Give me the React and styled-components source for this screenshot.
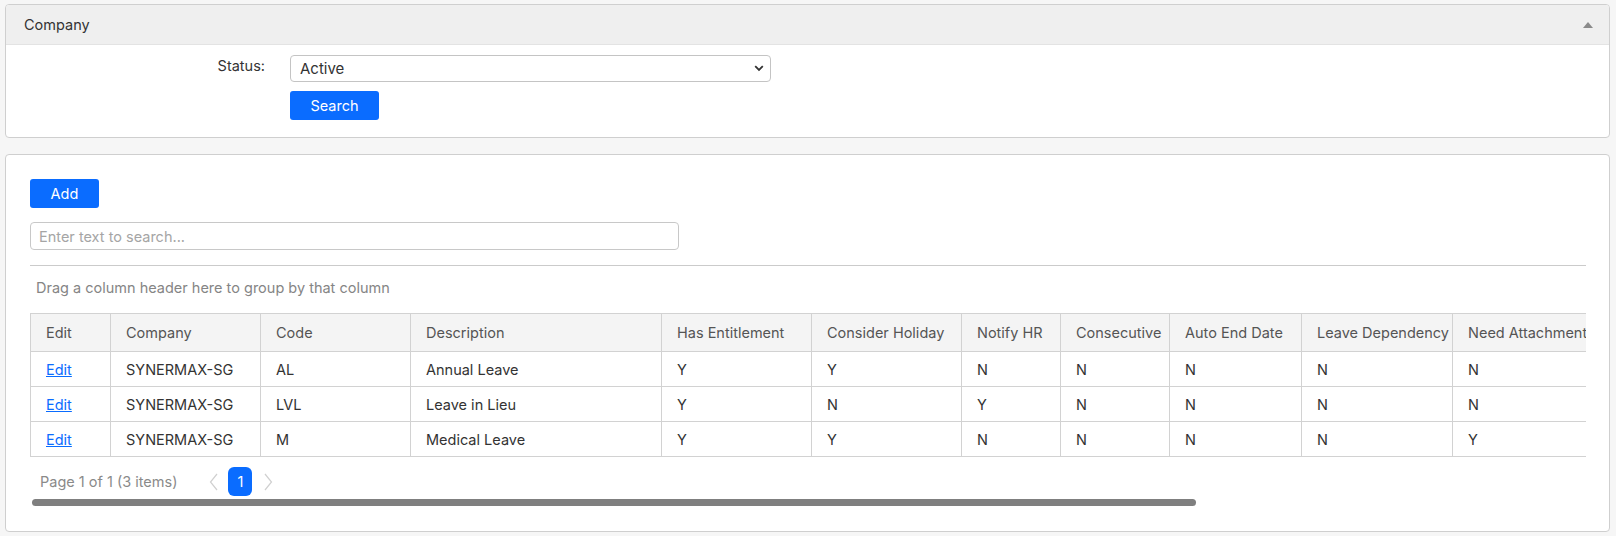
import React, { useState } from 'react';
import styled, { createGlobalStyle } from 'styled-components';

const GlobalStyle = createGlobalStyle`
  body {
    margin: 0;
    background: #f6f6f6;
    font-family: Inter, 'Liberation Sans', Arial, sans-serif;
    font-size: 14.5px;
    color: #333;
  }
`;

const Page = styled.div`
  display: flex;
  flex-direction: column;
  gap: 16px;
  padding: 4px 6px 6px 5px;
`;

const Panel = styled.section`
  background: #fff;
  border: 1px solid #cfcfcf;
  border-radius: 4px;
  overflow: hidden;
`;

const PanelHeader = styled.div`
  display: flex;
  align-items: center;
  justify-content: space-between;
  height: 39px;
  padding: 0 16px 0 18px;
  background: #efefef;
  border-bottom: 1px solid #e3e3e3;
  color: #333;
`;

const CollapseArrow = styled.span`
  width: 0;
  height: 0;
  border-left: 5px solid transparent;
  border-right: 5px solid transparent;
  border-bottom: 6px solid #8a8a8a;
`;

const FilterForm = styled.div`
  display: grid;
  grid-template-columns: 259px 481px;
  column-gap: 25px;
  row-gap: 9px;
  padding: 10px 0 17px;
`;

const Label = styled.label`
  text-align: right;
  padding-top: 2px;
  color: #333;
`;

const SelectWrap = styled.div`
  position: relative;
`;

const Select = styled.select`
  appearance: none;
  width: 100%;
  height: 27px;
  padding: 0 28px 0 9px;
  border: 1px solid #c4c4c4;
  border-radius: 4px;
  background: #fff;
  font: inherit;
  font-size: 15px;
  color: #333;
`;

const SelectChevron = styled.svg`
  position: absolute;
  right: 7px;
  top: 10px;
  pointer-events: none;
`;

const Button = styled.button`
  width: ${(p) => p.w}px;
  height: 29px;
  border: none;
  border-radius: 3px;
  background: #0a6cff;
  color: #fff;
  font: inherit;
  cursor: pointer;
`;

const GridBody = styled.div`
  display: flex;
  flex-direction: column;
  padding: 24px 23px 25px 24px;
`;

const SearchInput = styled.input`
  box-sizing: border-box;
  width: 649px;
  height: 28px;
  margin-top: 14px;
  padding: 0 8px;
  border: 1px solid #c8c8c8;
  border-radius: 4px;
  font: inherit;
  color: #333;
  &::placeholder {
    color: #a5a5a5;
  }
`;

const GroupPanel = styled.div`
  margin-top: 15px;
  border-top: 1px solid #cbcbcb;
  padding: 13px 6px 0;
  height: 34px;
  color: #858585;
`;

const TableClip = styled.div`
  overflow: hidden;
  width: 1556px;
`;

const Table = styled.table`
  border-collapse: collapse;
  table-layout: fixed;
  width: ${(p) => p.w}px;
`;

const Th = styled.th`
  height: 37px;
  padding: 0 15px;
  text-align: left;
  font-weight: normal;
  color: #555;
  background: #f4f4f4;
  border: 1px solid #d2d2d2;
  white-space: nowrap;
  overflow: hidden;
`;

const Td = styled.td`
  height: 34px;
  padding: 0 15px;
  color: #333;
  border: 1px solid #d2d2d2;
  white-space: nowrap;
  overflow: hidden;
`;

const EditLink = styled.a`
  color: #0a6cff;
  text-decoration: underline;
  cursor: pointer;
`;

const Pager = styled.div`
  display: flex;
  align-items: center;
  height: 29px;
  margin-top: 10px;
  padding-left: 10px;
  color: #8a8a8a;
`;

const PagerArrow = styled.svg`
  margin-left: ${(p) => p.ml}px;
  margin-right: ${(p) => p.mr}px;
`;

const PageNum = styled.span`
  display: inline-flex;
  align-items: center;
  justify-content: center;
  width: 24px;
  height: 29px;
  border-radius: 6px;
  background: #0a6cff;
  color: #fff;
`;

const ScrollThumb = styled.div`
  height: 7px;
  margin: 3px 0 0 2px;
  border-radius: 4px;
  background: #7f7f7f;
`;

const columns = [
  ['Edit', 80],
  ['Company', 150],
  ['Code', 150],
  ['Description', 251],
  ['Has Entitlement', 150],
  ['Consider Holiday', 150],
  ['Notify HR', 99],
  ['Consecutive', 109],
  ['Auto End Date', 132],
  ['Leave Dependency', 151],
  ['Need Attachment', 160],
  ['Need Reason', 180],
  ['Status', 316],
];

const tableWidth = columns.reduce((s, c) => s + c[1], 0);

const rows = [
  ['SYNERMAX-SG', 'AL', 'Annual Leave', 'Y', 'Y', 'N', 'N', 'N', 'N', 'N', 'Y', 'Active'],
  ['SYNERMAX-SG', 'LVL', 'Leave in Lieu', 'Y', 'N', 'Y', 'N', 'N', 'N', 'N', 'Y', 'Active'],
  ['SYNERMAX-SG', 'M', 'Medical Leave', 'Y', 'Y', 'N', 'N', 'N', 'N', 'Y', 'Y', 'Active'],
];

const Chevron = ({ dir }) => (
  <PagerArrow
    width="9"
    height="18"
    viewBox="0 0 9 18"
    ml={dir === 'left' ? 32 : 12}
    mr={dir === 'left' ? 10 : 0}
  >
    <path
      d={dir === 'left' ? 'M8 1 L1.5 9 L8 17' : 'M1 1 L7.5 9 L1 17'}
      fill="none"
      stroke="#d0d0d0"
      strokeWidth="1.2"
    />
  </PagerArrow>
);

export default function App() {
  const [status, setStatus] = useState('Active');

  return (
    <Page>
      <GlobalStyle />
      <Panel>
        <PanelHeader>
          Company
          <CollapseArrow />
        </PanelHeader>
        <FilterForm>
          <Label>Status:</Label>
          <SelectWrap>
            <Select value={status} onChange={(e) => setStatus(e.target.value)}>
              <option>Active</option>
              <option>Inactive</option>
              <option>All</option>
            </Select>
            <SelectChevron width="10" height="7" viewBox="0 0 10 7">
              <path d="M1.2 1.2 L5 5 L8.8 1.2" fill="none" stroke="#333" strokeWidth="1.8" />
            </SelectChevron>
          </SelectWrap>
          <span />
          <div>
            <Button w={89}>Search</Button>
          </div>
        </FilterForm>
      </Panel>

      <Panel>
        <GridBody>
          <div>
            <Button w={69}>Add</Button>
          </div>
          <SearchInput placeholder="Enter text to search..." />
          <GroupPanel>Drag a column header here to group by that column</GroupPanel>
          <TableClip>
            <Table w={tableWidth}>
              <colgroup>
                {columns.map(([name, w]) => (
                  <col key={name} style={{ width: w }} />
                ))}
              </colgroup>
              <thead>
                <tr>
                  {columns.map(([name]) => (
                    <Th key={name}>{name}</Th>
                  ))}
                </tr>
              </thead>
              <tbody>
                {rows.map((r) => (
                  <tr key={r[1]}>
                    <Td>
                      <EditLink>Edit</EditLink>
                    </Td>
                    {r.map((v, i) => (
                      <Td key={i}>{v}</Td>
                    ))}
                  </tr>
                ))}
              </tbody>
            </Table>
          </TableClip>
          <Pager>
            Page 1 of 1 (3 items)
            <Chevron dir="left" />
            <PageNum>1</PageNum>
            <Chevron dir="right" />
          </Pager>
          <ScrollThumb style={{ width: (1556 / tableWidth) * 1554 }} />
        </GridBody>
      </Panel>
    </Page>
  );
}
